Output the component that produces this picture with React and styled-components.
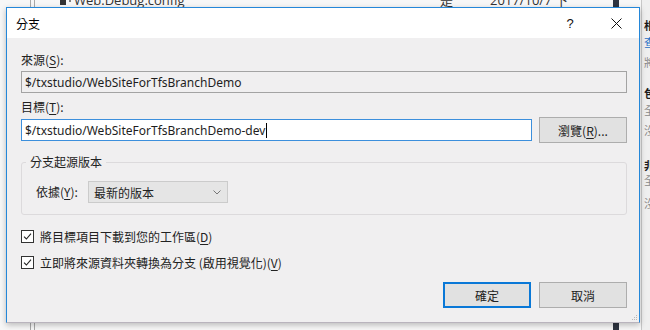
import React from 'react';
import styled, { createGlobalStyle } from 'styled-components';

const GlobalStyle = createGlobalStyle`
  html, body {
    margin: 0;
    padding: 0;
  }
  body {
    width: 650px;
    height: 330px;
    overflow: hidden;
    font-family: "Noto Sans", "Noto Sans CJK TC", sans-serif;
    font-size: 12px;
    color: #000;
  }
`;

const Desktop = styled.div`
  position: relative;
  width: 650px;
  height: 330px;
  overflow: hidden;
  display: grid;
  grid-template-columns: 1fr 9px;
  grid-template-rows: 7px 1fr;
  background-color: #f7f7f7;
  background-image: linear-gradient(
    to right,
    transparent 30px, #a8a8a8 30px, #a8a8a8 31px, transparent 31px,
    transparent 34px, #a8a8a8 34px, #a8a8a8 35px, transparent 35px,
    transparent 613px, #2e3440 613px, #2e3440 619px, transparent 619px
  );
`;

const TopRow = styled.div`
  display: flex;
  align-items: flex-start;
  padding-left: 58px;
  overflow: hidden;
  color: #333;
  font-family: "Open Sans", "Noto Sans CJK TC", sans-serif;
`;

const TopCell = styled.span`
  display: flex;
  align-items: center;
  gap: 2px;
  width: ${p => (p.$width ? `${p.$width}px` : 'auto')};
  margin-top: -8px;
  font-size: 13px;
  line-height: 16px;
  white-space: nowrap;
  flex: none;
`;

const SideStrip = styled.div`
  grid-column: 2;
  grid-row: 1 / span 2;
  display: flex;
  flex-direction: column;
  border-left: 1px solid #c8c8c8;
  background: #efefef;
  padding-left: 2px;
  overflow: hidden;
  font-family: "Noto Sans CJK TC", sans-serif;
`;

const SideChar = styled.span`
  margin-top: ${p => p.$gap}px;
  height: 12px;
  line-height: 12px;
  font-size: 11px;
  white-space: nowrap;
  flex: none;
  color: ${p => (p.$tone === 'bold' ? '#1b1b1b' : p.$tone === 'link' ? '#1f6fc5' : '#8a8a8a')};
  font-weight: ${p => (p.$tone === 'bold' ? 700 : 400)};
`;

const Dialog = styled.div`
  position: absolute;
  left: 6px;
  top: 7px;
  width: 634px;
  height: 316px;
  box-sizing: border-box;
  border: 1px solid #2487d9;
  border-bottom-color: #b9b4bd;
  background: #f0eff0;
  display: flex;
  flex-direction: column;
  box-shadow: 0 2px 6px rgba(0, 0, 0, 0.25);
`;

const TitleBar = styled.div`
  height: 30px;
  flex: none;
  background: #fff;
  display: flex;
  align-items: center;
  padding-left: 9px;
`;

const Title = styled.span`
  flex: 1;
  font-family: "Noto Sans CJK TC", sans-serif;
  font-size: 12px;
  color: #000;
`;

const TitleButton = styled.div`
  width: 46px;
  height: 30px;
  display: flex;
  align-items: center;
  justify-content: center;
  color: #111;
  font-family: "Liberation Sans", sans-serif;
  font-size: 13px;
`;

const Body = styled.div`
  flex: 1;
  display: flex;
  flex-direction: column;
  padding: 14px 12px 14px 14px;
`;

const Label = styled.div`
  font-family: "Noto Sans CJK TC", sans-serif;
  font-size: 12px;
  line-height: 16px;
  height: 16px;
  margin-top: ${p => p.$top || 0}px;
  color: #222;
  white-space: nowrap;
`;

const Key = styled.span`
  text-decoration: underline;
  text-underline-offset: 2px;
`;

const TextField = styled.div`
  box-sizing: border-box;
  height: 22px;
  margin-top: ${p => p.$top || 0}px;
  flex: ${p => (p.$grow ? 1 : 'none')};
  display: flex;
  align-items: center;
  padding-left: 3px;
  border: 1px solid ${p => (p.$active ? '#3c8fdc' : '#a3a3a3')};
  background: ${p => (p.$active ? '#fff' : '#f0eff0')};
  font-size: 12px;
  color: #1e1e1e;
  white-space: nowrap;
`;

const Caret = styled.span`
  display: inline-block;
  width: 1px;
  height: 15px;
  background: #000;
  margin-left: 1px;
`;

const FieldRow = styled.div`
  display: flex;
  align-items: center;
  gap: 7px;
  height: 26px;
  margin-top: 2px;
`;

const Button = styled.div`
  box-sizing: border-box;
  width: 88px;
  height: 26px;
  display: flex;
  align-items: center;
  justify-content: center;
  background: #e1e1e1;
  border: ${p => (p.$primary ? '2px solid #0a78d7' : '1px solid #adadad')};
  font-family: "Noto Sans CJK TC", sans-serif;
  font-size: 12px;
  color: #222;
  flex: none;
`;

const Group = styled.fieldset`
  margin: 11px 0 0;
  padding: 11px 14px 11px;
  border: 1px solid #dcdadc;
  border-radius: 3px;
  min-width: 0;
`;

const Legend = styled.legend`
  margin-left: -10px;
  padding: 0 4px;
  font-family: "Noto Sans CJK TC", sans-serif;
  font-size: 12px;
  line-height: 16px;
  color: #222;
`;

const SelectRow = styled.div`
  display: flex;
  align-items: center;
`;

const SelectLabel = styled(Label)`
  width: 52px;
`;

const Select = styled.div`
  box-sizing: border-box;
  width: 140px;
  height: 22px;
  display: flex;
  align-items: center;
  justify-content: space-between;
  padding: 0 6px 0 5px;
  background: #e5e5e5;
  border: 1px solid #cbcbcb;
  font-family: "Noto Sans CJK TC", sans-serif;
  font-size: 12px;
  color: #222;
`;

const CheckRow = styled.div`
  display: flex;
  align-items: center;
  gap: 6px;
  height: 16px;
  margin-top: ${p => p.$top}px;
`;

const CheckBox = styled.div`
  box-sizing: border-box;
  width: 13px;
  height: 13px;
  border: 1px solid #333;
  background: #fff;
  display: flex;
  align-items: center;
  justify-content: center;
`;

const CheckText = styled.span`
  font-family: "Noto Sans CJK TC", sans-serif;
  font-size: 12px;
  color: #222;
  white-space: nowrap;
`;

const Footer = styled.div`
  margin-top: auto;
  display: flex;
  justify-content: flex-end;
  gap: 8px;
`;

const Grip = styled.svg`
  position: absolute;
  right: 1px;
  bottom: 1px;
`;

const sideChars = [
  { c: '相', tone: 'bold', gap: 19 },
  { c: '查', tone: 'link', gap: 5 },
  { c: '將', tone: 'dim', gap: 8 },
  { c: '包', tone: 'bold', gap: 19 },
  { c: '全', tone: 'dim', gap: 5 },
  { c: '沒', tone: 'dim', gap: 8 },
  { c: '非', tone: 'bold', gap: 23 },
  { c: '全', tone: 'dim', gap: 3 },
  { c: '沒', tone: 'dim', gap: 11 },
];

function Check() {
  return (
    <CheckBox>
      <svg width="9" height="9" viewBox="0 0 9 9">
        <path d="M1 4.6 L3.4 7 L8 1.6" fill="none" stroke="#222" strokeWidth="1.1" />
      </svg>
    </CheckBox>
  );
}

function App() {
  return (
    <>
      <GlobalStyle />
      <Desktop>
        <TopRow>
          <TopCell $width={382}>
            <svg width="14" height="14" viewBox="0 0 14 14">
              <rect x="2" y="6" width="6" height="6" fill="#333" />
              <path d="M9 4 A3 3 0 0 1 12 7 L12 9" fill="none" stroke="#333" strokeWidth="1.2" />
            </svg>
            Web.Debug.config
          </TopCell>
          <TopCell $width={50}>是</TopCell>
          <TopCell>2017/10/7 下</TopCell>
        </TopRow>
        <SideStrip>
          {sideChars.map((s, i) => (
            <SideChar key={i} $tone={s.tone} $gap={s.gap}>{s.c}</SideChar>
          ))}
        </SideStrip>

        <Dialog>
          <TitleBar>
            <Title>分支</Title>
            <TitleButton>?</TitleButton>
            <TitleButton>
              <svg width="11" height="11" viewBox="0 0 11 11">
                <path d="M0.5 0.5 L10.5 10.5 M10.5 0.5 L0.5 10.5" stroke="#111" strokeWidth="1" />
              </svg>
            </TitleButton>
          </TitleBar>

          <Body>
            <Label>來源(<Key>S</Key>):</Label>
            <TextField $top={3}>$/txstudio/WebSiteForTfsBranchDemo</TextField>

            <Label $top={6}>目標(<Key>T</Key>):</Label>
            <FieldRow>
              <TextField $active $grow>
                $/txstudio/WebSiteForTfsBranchDemo-dev<Caret />
              </TextField>
              <Button>瀏覽(<Key>R</Key>)...</Button>
            </FieldRow>

            <Group>
              <Legend>分支起源版本</Legend>
              <SelectRow>
                <SelectLabel>依據(<Key>Y</Key>):</SelectLabel>
                <Select>
                  最新的版本
                  <svg width="8" height="5" viewBox="0 0 8 5">
                    <path d="M0.5 0.5 L4 4 L7.5 0.5" fill="none" stroke="#777" strokeWidth="1" />
                  </svg>
                </Select>
              </SelectRow>
            </Group>

            <CheckRow $top={13}>
              <Check />
              <CheckText>將目標項目下載到您的工作區(<Key>D</Key>)</CheckText>
            </CheckRow>
            <CheckRow $top={10}>
              <Check />
              <CheckText>立即將來源資料夾轉換為分支 (啟用視覺化)(<Key>V</Key>)</CheckText>
            </CheckRow>

            <Footer>
              <Button $primary>確定</Button>
              <Button>取消</Button>
            </Footer>
          </Body>

          <Grip width="7" height="7" viewBox="0 0 7 7">
            <rect x="5" y="1" width="1" height="1" fill="#b8b8b8" />
            <rect x="3" y="3" width="1" height="1" fill="#b8b8b8" />
            <rect x="5" y="3" width="1" height="1" fill="#b8b8b8" />
            <rect x="1" y="5" width="1" height="1" fill="#b8b8b8" />
            <rect x="3" y="5" width="1" height="1" fill="#b8b8b8" />
            <rect x="5" y="5" width="1" height="1" fill="#b8b8b8" />
          </Grip>
        </Dialog>
      </Desktop>
    </>
  );
}

export default App;
